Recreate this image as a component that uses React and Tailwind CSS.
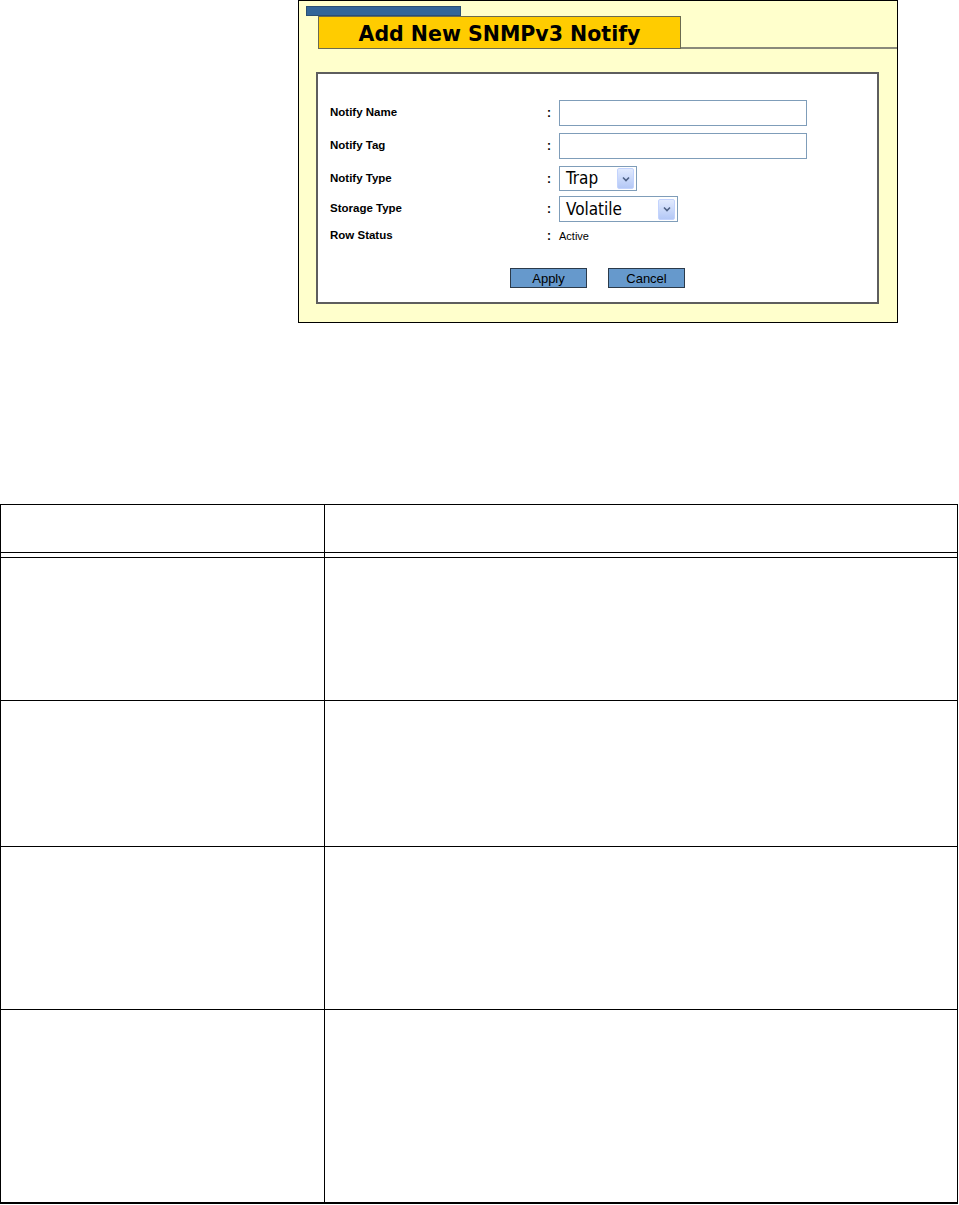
import React from 'react';

const labelFont = { fontFamily: '"Liberation Sans", Arial, sans-serif' };

function SelectBox({ value, width }) {
  return (
    <div
      className={`${width} h-full flex items-center justify-between border border-[#7f9db9] bg-white pl-[6px] pr-[2px]`}
    >
      <span className="text-[17px] leading-none text-black font-['DejaVu_Sans_Condensed','DejaVu_Sans',sans-serif]">
        {value}
      </span>
      <span className="w-[17px] h-[21px] flex items-center justify-center rounded-[2px] border border-[#c3d3fd] bg-gradient-to-b from-[#e1eafe] to-[#b4c8f6]">
        <svg width="8" height="6" viewBox="0 0 8 6">
          <path d="M1 1.5 L4 4.5 L7 1.5" fill="none" stroke="#4d6185" strokeWidth="1.6" />
        </svg>
      </span>
    </div>
  );
}

function FormRow({ label, height, top, children }) {
  return (
    <div className={`flex items-center ${height} ${top}`}>
      <span className="w-[217px] text-[11.5px] font-bold text-black" style={labelFont}>
        {label}
      </span>
      <span className="w-[12px] text-[12px] font-bold text-black" style={labelFont}>:</span>
      {children}
    </div>
  );
}

export default function App() {
  const rows = [
    { h: 'h-[142px]', border: 'border-b' },
    { h: 'h-[145px]', border: 'border-b' },
    { h: 'h-[162px]', border: 'border-b' },
    { h: 'h-[192px]', border: '' },
  ];

  return (
    <div className="w-[959px] min-h-[1205px] bg-white">
      {/* Screenshot panel */}
      <div className="ml-[298px] w-[600px] h-[323px] border border-black bg-[#ffffcc]">
        <div className="ml-[7px] mt-[5px] w-[155px] h-[10px] bg-[#336699] border border-[#2a4f74]" />
        <div className="flex items-end h-[33px]">
          <div className="ml-[19px] w-[363px] h-[33px] bg-[#ffcc00] border border-[#6b6b50] flex items-center justify-center pt-[3px]">
            <span className="text-[20.5px] font-bold text-black leading-none font-['DejaVu_Sans',Verdana,sans-serif]">
              Add New SNMPv3 Notify
            </span>
          </div>
          <div className="flex-1 h-[2px] bg-[#8a8a7a]" />
        </div>
        <div className="ml-[17px] mt-[23px] w-[563px] h-[232px] border-2 border-[#5e5e5e] bg-white pl-[12px]">
          <FormRow label="Notify Name" height="h-[26px]" top="mt-[26px]">
            <div className="w-[248px] h-full border border-[#7f9db9] bg-white" />
          </FormRow>
          <FormRow label="Notify Tag" height="h-[26px]" top="mt-[7px]">
            <div className="w-[248px] h-full border border-[#7f9db9] bg-white" />
          </FormRow>
          <FormRow label="Notify Type" height="h-[25px]" top="mt-[7px]">
            <SelectBox value="Trap" width="w-[78px]" />
          </FormRow>
          <FormRow label="Storage Type" height="h-[26px]" top="mt-[5px]">
            <SelectBox value="Volatile" width="w-[119px]" />
          </FormRow>
          <FormRow label="Row Status" height="h-[16px]" top="mt-[6px]">
            <span className="text-[11px] text-black" style={labelFont}>Active</span>
          </FormRow>
          <div className="flex justify-center gap-[21px] mt-[24px] pr-[12px]">
            <button className="w-[77px] h-[20px] bg-[#6699cc] border border-[#2b3a4a] text-[13px] text-black leading-none" style={labelFont}>
              Apply
            </button>
            <button className="w-[77px] h-[20px] bg-[#6699cc] border border-[#2b3a4a] text-[13px] text-black leading-none" style={labelFont}>
              Cancel
            </button>
          </div>
        </div>
      </div>

      {/* Parameter table */}
      <div className="mt-[181px] w-[958px] border-t border-l border-r border-b-2 border-black">
        <div className="flex h-[48px] border-b border-black">
          <div className="w-[324px] border-r border-black" />
          <div className="flex-1" />
        </div>
        <div className="flex h-[5px] border-b border-black">
          <div className="w-[324px] border-r border-black" />
          <div className="flex-1" />
        </div>
        {rows.map((r, i) => (
          <div key={i} className={`flex ${r.h} ${r.border} border-black box-content`}>
            <div className="w-[324px] border-r border-black" />
            <div className="flex-1" />
          </div>
        ))}
      </div>
    </div>
  );
}
